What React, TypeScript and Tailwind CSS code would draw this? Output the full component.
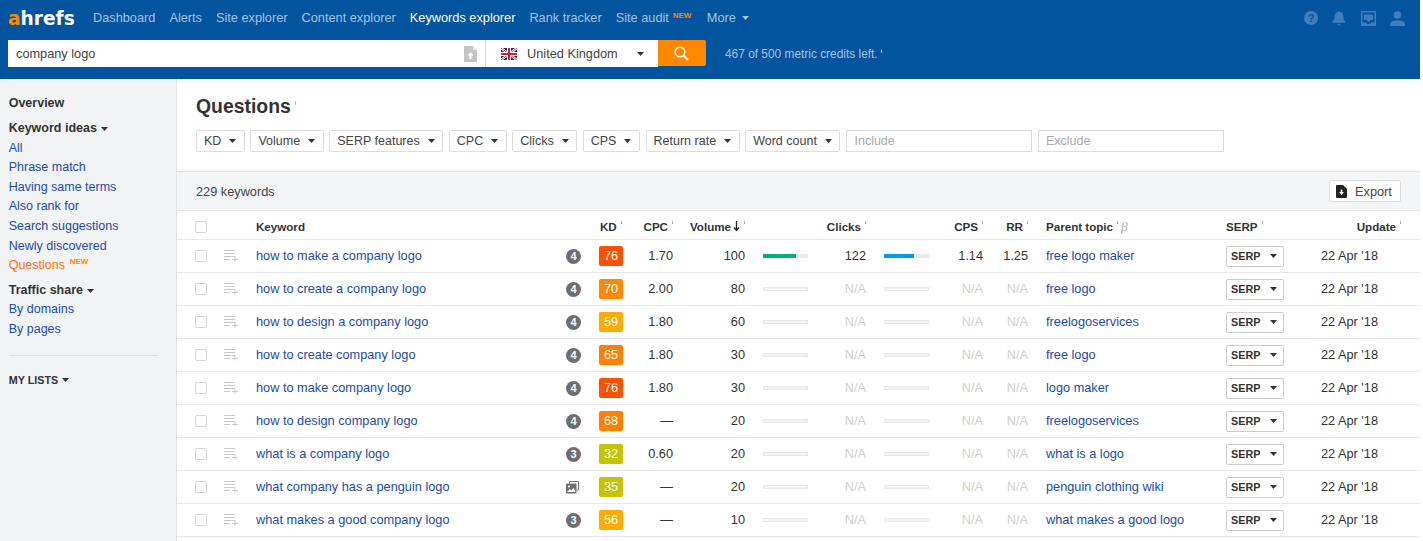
const GRID = "grid grid-cols-[29px_32px_307px_36px_24px_50px_72px_63px_58px_63px_54px_45px_198px_58px_117px] items-center pl-[18px] pr-[19px]";

const NAV = [
  { t: "Dashboard" }, { t: "Alerts" }, { t: "Site explorer" }, { t: "Content explorer" },
  { t: "Keywords explorer", on: true }, { t: "Rank tracker" }, { t: "Site audit", isNew: true },
];

const ROWS = [
  { k: "how to make a company logo", b: "4", kd: 76, c: "bg-[#ff5000]", cpc: "1.70", v: 100, clicks: "122", cps: "1.14", rr: "1.25", p: "free logo maker", full: true },
  { k: "how to create a company logo", b: "4", kd: 70, c: "bg-[#ff8800]", cpc: "2.00", v: 80, p: "free logo" },
  { k: "how to design a company logo", b: "4", kd: 59, c: "bg-[#ffaa00]", cpc: "1.80", v: 60, p: "freelogoservices" },
  { k: "how to create company logo", b: "4", kd: 65, c: "bg-[#ff8000]", cpc: "1.80", v: 30, p: "free logo" },
  { k: "how to make company logo", b: "4", kd: 76, c: "bg-[#ff5000]", cpc: "1.80", v: 30, p: "logo maker" },
  { k: "how to design company logo", b: "4", kd: 68, c: "bg-[#ff8000]", cpc: "—", v: 20, p: "freelogoservices" },
  { k: "what is a company logo", b: "3", kd: 32, c: "bg-[#c4c400]", cpc: "0.60", v: 20, p: "what is a logo" },
  { k: "what company has a penguin logo", b: "img", kd: 35, c: "bg-[#c4c400]", cpc: "—", v: 20, p: "penguin clothing wiki" },
  { k: "what makes a good company logo", b: "3", kd: 56, c: "bg-[#ffaa00]", cpc: "—", v: 10, p: "what makes a good logo" },
];

const FILTERS = ["KD", "Volume", "SERP features", "CPC", "Clicks", "CPS", "Return rate", "Word count"];

function Caret({ className = "" }: { className?: string }) {
  return (
    <svg width="7" height="4" viewBox="0 0 7 4" className={`shrink-0 ${className}`} fill="currentColor">
      <path d="M0 0h7L3.500 4z" />
    </svg>
  );
}

function Tip({ className = "ml-[4px]" }: { className?: string }) {
  return <span className={`inline-block w-px h-[3px] bg-[#aaa] self-start mt-[3px] ${className}`} />;
}

function Head({ children, right, noTip }: { children: React.ReactNode; right?: boolean; noTip?: boolean }) {
  return (
    <div className={`flex items-center font-bold text-[#333] ${right ? "justify-end" : ""}`}>
      {children}
      {!noTip && <Tip />}
    </div>
  );
}

function Flag() {
  return (
    <svg width="16" height="12" viewBox="0 0 16 12" className="shrink-0">
      <rect width="16" height="12" fill="#1f2a6e" />
      <path d="M0 0l16 12M16 0L0 12" stroke="#fff" strokeWidth="2.4" />
      <path d="M0 0l16 12M16 0L0 12" stroke="#d0213a" strokeWidth="0.8" />
      <path d="M8 0v12M0 6h16" stroke="#fff" strokeWidth="4" />
      <path d="M8 0v12M0 6h16" stroke="#d0213a" strokeWidth="2.2" />
    </svg>
  );
}

function ListAdd() {
  return (
    <svg width="14" height="12" viewBox="0 0 14 12" fill="none" stroke="#c9c9c9" strokeWidth="1">
      <path d="M0 .5h11M0 3.500h11M0 6.500h11M0 9.500h6M8 9.500h6M11 6.500v5" />
    </svg>
  );
}

function PhotoIcon() {
  return (
    <svg width="13" height="13" viewBox="0 0 13 13" className="ml-[3px]">
      <path d="M3.500 2.500V.5h9v8.500h-2" fill="none" stroke="#6e6e6e" />
      <rect x="0" y="2.500" width="10.500" height="10" rx="1" fill="#6e6e6e" />
      <circle cx="3" cy="5.500" r="1.100" fill="#fff" />
      <path d="M1 11l2.800-3 1.600 1.500L7.500 7 9.800 11z" fill="#fff" />
    </svg>
  );
}

function Bar({ value, color }: { value?: number; color?: string }) {
  return (
    <div className="pl-[18px]">
      {value ? (
        <div className="h-[4px] bg-[#e9e9e9]">
          <div className={`h-full ${color}`} style={{ width: `${value}%` }} />
        </div>
      ) : (
        <div className="h-[4px] bg-[#f3f3f3] border border-[#e8e8e8]" />
      )}
    </div>
  );
}

function SideLink({ children }: { children: React.ReactNode }) {
  return <div className="text-[#1b4ca8] leading-[19.6px] h-[19.6px]">{children}</div>;
}

export default function App() {
  return (
    <div className="w-[1420px] h-[541px] overflow-hidden bg-white text-[12.75px] text-[#333] font-['Liberation_Sans',Arial,sans-serif]">
      <header className="h-[79px] bg-[#02549f]">
        <div className="h-[36px] mb-[4px] pl-[8px] pr-[15px] flex items-center">
          <div className="w-[85px] text-[20px] leading-none font-bold text-white font-['DejaVu_Sans',sans-serif] scale-x-[0.93] origin-left whitespace-nowrap">
            <span className="text-[#ff8800]">a</span>hrefs
          </div>
          <nav className="flex items-center gap-[14px] text-[#a5c3e3]">
            {NAV.map((n) => (
              <div key={n.t} className={`relative ${n.on ? "text-white" : ""} ${n.isNew ? "mr-[24px]" : ""}`}>
                {n.t}
                {n.isNew && <span className="absolute top-[2px] left-[57px] text-[8px] font-bold text-[#ff8800]">NEW</span>}
              </div>
            ))}
            <div className="flex items-center gap-[6px]">More <Caret /></div>
          </nav>
          <div className="ml-auto flex items-center gap-[14.5px] text-[#3f7fc0]">
            <svg width="14" height="14" viewBox="0 0 14 14"><circle cx="7" cy="7" r="7" fill="currentColor" /><text x="7" y="11" textAnchor="middle" fontSize="11" fontWeight="700" fill="#02549f" fontFamily="Liberation Sans">?</text></svg>
            <svg width="14" height="15" viewBox="0 0 14 15" fill="currentColor"><path d="M7 0a1 1 0 0 1 1 1c2.400.5 3.300 2.400 3.300 4.600 0 2.500.8 4.100 2.200 5.400v.8H.5V11c1.400-1.300 2.200-2.900 2.200-5.400C2.700 3.400 3.600 1.500 6 1a1 1 0 0 1 1-1zM5.500 13h3a1.500 1.500 0 0 1-3 0z" /></svg>
            <svg width="15" height="15" viewBox="0 0 15 15" fill="currentColor" fillRule="evenodd"><path d="M1 0h13a1 1 0 0 1 1 1v13a1 1 0 0 1-1 1H1a1 1 0 0 1-1-1V1a1 1 0 0 1 1-1zm.5 1.500v10h3.500l1 1.500h3l1-1.500h3.500v-10z" /><rect x="3" y="3.500" width="9" height="5.500" /><rect x="6" y="9" width="3" height="1.500" /></svg>
            <svg width="15" height="15" viewBox="0 0 15 15" fill="currentColor"><circle cx="7.500" cy="4" r="3.700" /><path d="M0 15v-1.500C0 10.500 4 9.200 7.500 9.200S15 10.500 15 13.500V15z" /></svg>
          </div>
        </div>
        <div className="h-[27px] pl-[8px] flex items-stretch">
          <div className="w-[477px] bg-white flex items-center pl-[8px] pr-[8px] text-[#444]">
            company logo
            <svg width="13" height="16" viewBox="0 0 13 16" className="ml-auto"><path d="M0 0h9l4 4v12H0z" fill="#c4c4c4" /><path d="M9 0l4 4H9z" fill="#eee" /><path d="M6.500 6l3 3.500H7.600V13H5.400V9.500H3.500z" fill="#fff" /></svg>
          </div>
          <div className="w-[173px] bg-white border-l border-[#ddd] flex items-center pl-[15px] pr-[14px] text-[#444]">
            <Flag />
            <span className="ml-[10px]">United Kingdom</span>
            <Caret className="ml-auto text-[#333]" />
          </div>
          <div className="w-[48px] h-[26px] bg-[#ff8800] rounded-r-[2px] flex items-center justify-center">
            <svg width="15" height="15" viewBox="0 0 15 15" fill="none" stroke="#fff" strokeWidth="1.5" className="-ml-[2px]"><circle cx="6" cy="6" r="4.800" /><path d="M9.500 9.500L14 14" strokeWidth="2" /></svg>
          </div>
          <div className="ml-[19px] flex items-center text-[11.9px] text-[#a5c3e3] pt-[2px]">
            467 of 500 metric credits left.<span className="inline-block w-px h-[3px] bg-[#a5c3e3] ml-[3px] -mt-[6px]" />
          </div>
        </div>
      </header>

      <div className="flex h-[462px]">
        <aside className="w-[177px] shrink-0 bg-[#f2f3f5] border-r border-[#e4e4e4] pl-[8.7px] pr-[18px] pt-[15px] text-[12.5px]">
          <div className="font-bold h-[19.6px] leading-[19.6px]">Overview</div>
          <div className="mt-[5.5px] font-bold h-[19.6px] leading-[19.6px] flex items-center gap-[4px]">Keyword ideas <Caret /></div>
          {["All", "Phrase match", "Having same terms", "Also rank for", "Search suggestions", "Newly discovered"].map((s) => <SideLink key={s}>{s}</SideLink>)}
          <div className="relative text-[#ff6f10] h-[19.6px] leading-[19.6px]">Questions<span className="absolute left-[61px] -top-[4px] text-[8px] font-bold text-[#ff8800]">NEW</span></div>
          <div className="mt-[5px] font-bold h-[19.6px] leading-[19.6px] flex items-center gap-[4px]">Traffic share <Caret /></div>
          <SideLink>By domains</SideLink>
          <SideLink>By pages</SideLink>
          <div className="mt-[15px] border-t border-[#e0e0e0]" />
          <div className="mt-[16px] text-[10.8px] font-bold flex items-center gap-[4px]">MY LISTS <Caret /></div>
        </aside>

        <main className="flex-1 min-w-0">
          <div className="h-[93px] pl-[19px] pt-[15px] border-b border-[#e4e4e4]">
            <div className="flex items-start h-[24px]">
              <h1 className="text-[19.4px] leading-[24px] font-bold text-[#333]">Questions</h1>
              <span className="inline-block w-px h-[4px] bg-[#bbb] ml-[4px] mt-[7px]" />
            </div>
            <div className="mt-[12px] flex items-center gap-[5.5px] text-[12.5px]">
              {FILTERS.map((f) => (
                <div key={f} className="h-[22px] pl-[7px] pr-[7.6px] border border-[#ddd] rounded-[2px] flex items-center gap-[8px] whitespace-nowrap text-[#444]">
                  {f}<Caret className="text-[#333]" />
                </div>
              ))}
              <div className="w-[186px] h-[22px] ml-[0.5px] px-[7px] border border-[#ddd] flex items-center text-[#aaa]">Include</div>
              <div className="w-[186px] h-[22px] px-[7px] border border-[#ddd] flex items-center text-[#aaa]">Exclude</div>
            </div>
          </div>

          <div className="h-[39px] bg-[#f4f5f7] border-b border-[#e4e4e4] pl-[19px] pr-[19px] flex items-center justify-between text-[#444]">
            <span className="pt-[1px]">229 keywords</span>
            <div className="w-[72px] h-[22px] bg-white border border-[#ddd] rounded-[2px] flex items-center pl-[6px] gap-[8px]">
              <svg width="11" height="13" viewBox="0 0 11 13"><path d="M0 1a1 1 0 0 1 1-1h6l4 4v8a1 1 0 0 1-1 1H1a1 1 0 0 1-1-1z" fill="#222" /><path d="M5.500 10l-2.500-3h1.700V4.500h1.600V7H8z" fill="#fff" /></svg>
              <span className="pt-[1px]">Export</span>
            </div>
          </div>

          <div className={`${GRID} h-[29px] pt-[3px] text-[11.6px] border-b border-[#e8e8e8]`}>
            <div className="w-[12px] h-[12px] border border-[#d5d5d5] rounded-[2px]" />
            <div />
            <Head noTip>Keyword</Head>
            <div />
            <div className="pl-[1px]"><Head>KD</Head></div>
            <Head right>CPC</Head>
            <Head right>
              Volume
              <svg width="7" height="10" viewBox="0 0 7 10" className="ml-[2px]" fill="none" stroke="#222" strokeWidth="1.3"><path d="M3.500 0v9M1 6.500l2.500 3 2.500-3" /></svg>
            </Head>
            <div />
            <Head right>Clicks</Head>
            <div />
            <Head right>CPS</Head>
            <Head right>RR</Head>
            <div className="pl-[18px] flex items-center">
              <Head>Parent topic</Head>
              <i className="ml-[3px] text-[13px] leading-none text-[#aaa] font-['Liberation_Serif',serif]">β</i>
            </div>
            <Head>SERP</Head>
            <Head right>Update</Head>
          </div>

          {ROWS.map((r) => (
            <div key={r.k} className={`${GRID} h-[33px] border-b border-[#e8e8e8]`}>
              <div className="w-[12px] h-[12px] border border-[#d5d5d5] rounded-[2px]" />
              <ListAdd />
              <a className="text-[#1b4ca8]">{r.k}</a>
              <div className="flex items-center">
                {r.b === "img" ? <PhotoIcon /> : (
                  <span className="ml-[3px] w-[15px] h-[15px] rounded-full bg-[#6e6e6e] text-white text-[11px] font-bold flex items-center justify-center">{r.b}</span>
                )}
              </div>
              <div className={`w-[24px] h-[20px] rounded-[2px] ${r.c} text-white flex items-center justify-center`}>{r.kd}</div>
              <div className="text-right">{r.cpc}</div>
              <div className="text-right">{r.v}</div>
              <Bar value={r.full ? 73 : 0} color="bg-[#00b373]" />
              <div className={`text-right ${r.clicks ? "" : "text-[#d0d0d0]"}`}>{r.clicks ?? "N/A"}</div>
              <Bar value={r.full ? 67 : 0} color="bg-[#0099ee]" />
              <div className={`text-right ${r.cps ? "" : "text-[#d0d0d0]"}`}>{r.cps ?? "N/A"}</div>
              <div className={`text-right ${r.rr ? "" : "text-[#d0d0d0]"}`}>{r.rr ?? "N/A"}</div>
              <a className="pl-[18px] text-[#1b4ca8]">{r.p}</a>
              <div className="w-[58px] h-[21px] border border-[#ccc] rounded-[2px] pl-[4px] pr-[6px] flex items-center justify-between text-[10.8px] font-bold">
                SERP <Caret />
              </div>
              <div className="text-right pr-[23px]">22 Apr '18</div>
            </div>
          ))}
        </main>
      </div>
    </div>
  );
}
